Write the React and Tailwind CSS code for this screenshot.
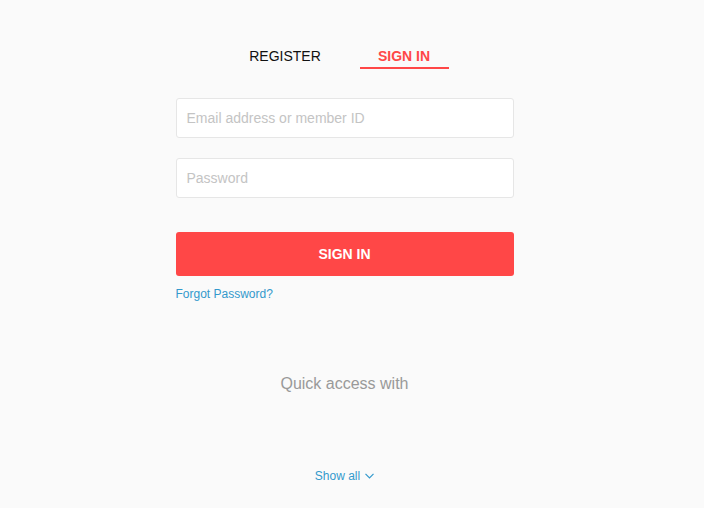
export default function App() {
  return (
    <div className="min-h-[508px] w-full bg-[#fafafa]" style={{ fontFamily: '"Liberation Sans", Arial, sans-serif' }}>
      <div className="w-[689px]">
        <div className="mx-auto w-[338px] pt-[46px]">
          <div className="flex justify-center gap-[30px]">
            <div className="w-[89px] h-[23px] text-center text-[14px] leading-[20px] text-[#111]">REGISTER</div>
            <div className="w-[89px] h-[23px] text-center text-[14px] leading-[20px] font-bold text-[#ff4747] border-b-2 border-[#ff4747]">SIGN IN</div>
          </div>
          <div className="mt-[29px] h-[40px] rounded-[3px] border border-[#e6e6e6] bg-white flex items-center px-[10px] text-[14px] text-[#c4c4c4]">Email address or member ID</div>
          <div className="mt-[20px] h-[40px] rounded-[3px] border border-[#e6e6e6] bg-white flex items-center px-[10px] text-[14px] text-[#c4c4c4]">Password</div>
          <div className="mt-[34px] h-[44px] rounded-[3px] bg-[#ff4747] flex items-center justify-center text-white text-[14px] font-bold">SIGN IN</div>
          <div className="mt-[10px] text-[12px] leading-[16px] text-[#3399cc]">Forgot Password?</div>
          <div className="mt-[72px] text-center text-[16px] leading-[20px] text-[#999]">Quick access with</div>
          <div className="mt-[74px] flex justify-center items-center gap-[5px] text-[12px] leading-[16px] text-[#3399cc]">
            Show all
            <svg width="9" height="6" viewBox="0 0 9 6" fill="none"><path d="M0.5 0.8 L4.5 4.8 L8.5 0.8" stroke="#3399cc" strokeWidth="1.2" /></svg>
          </div>
        </div>
      </div>
    </div>
  );
}
